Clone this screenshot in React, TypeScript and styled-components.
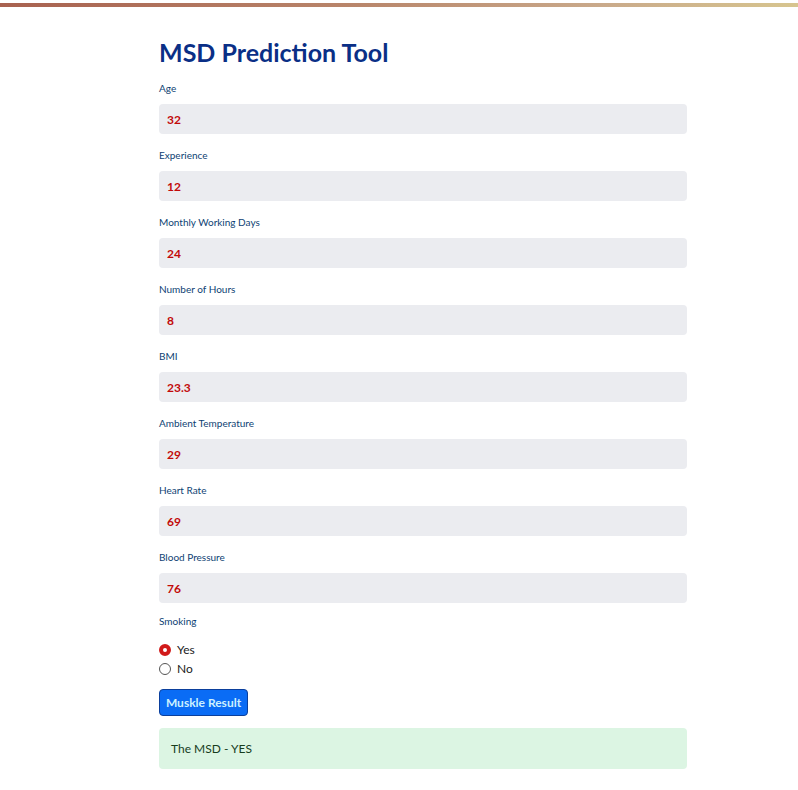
import styled, { createGlobalStyle } from "styled-components";

const GlobalStyle = createGlobalStyle`
  html, body {
    margin: 0;
    padding: 0;
    background: #ffffff;
    font-family: "Lato", "Noto Sans", sans-serif;
  }
`;

const TopBar = styled.div`
  height: 4px;
  margin-top: 3px;
  background: linear-gradient(90deg, #a8614f 0%, #b9866b 45%, #c9a98a 75%, #d7c58f 100%);
`;

const Page = styled.main`
  width: 528px;
  padding: 29px 0 0 159px;
  display: flex;
  flex-direction: column;
`;

const Title = styled.h1`
  margin: 0 0 14px;
  font-size: 25px;
  line-height: 32px;
  font-weight: 700;
  color: #0a2f86;
`;

const Field = styled.div`
  display: flex;
  flex-direction: column;
  height: 67px;
`;

const Label = styled.label<{ $gap?: number }>`
  font-size: 10px;
  line-height: 12px;
  color: #0e3f73;
  margin-bottom: ${(p) => p.$gap ?? 10}px;
`;

const Box = styled.div`
  height: 30px;
  background: #ebecf0;
  border-radius: 4px;
  display: flex;
  align-items: center;
  padding-left: 8px;
  font-size: 12px;
  font-weight: 700;
  color: #c20a0a;
`;

const Group = styled.div`
  display: flex;
  flex-direction: column;
  margin-top: -3px;
`;

const RadioGroup = styled.div`
  display: flex;
  flex-direction: column;
  gap: 6px;
`;

const RadioRow = styled.div`
  display: flex;
  align-items: center;
  gap: 6px;
  font-size: 12px;
  line-height: 13px;
  color: #1b1b1b;
`;

const Dot = styled.span<{ $on?: boolean }>`
  width: 12px;
  height: 12px;
  box-sizing: border-box;
  border-radius: 50%;
  border: ${(p) => (p.$on ? "4px solid #d11a1a" : "1px solid #555")};
  background: #fff;
`;

const Button = styled.button`
  align-self: flex-start;
  margin-top: 14px;
  width: 89px;
  height: 27px;
  background: #0a6cf5;
  border: 1px solid #0b3f9c;
  border-radius: 4px;
  color: #cdf1ff;
  font-family: inherit;
  font-size: 12px;
  font-weight: 700;
  padding: 0;
`;

const Result = styled.div`
  margin-top: 12px;
  height: 41px;
  background: #dcf5e3;
  border-radius: 4px;
  display: flex;
  align-items: center;
  padding-left: 12px;
  font-size: 12px;
  color: #173d1e;
`;

const fields = [
  ["Age", "32"],
  ["Experience", "12"],
  ["Monthly Working Days", "24"],
  ["Number of Hours", "8"],
  ["BMI", "23.3"],
  ["Ambient Temperature", "29"],
  ["Heart Rate", "69"],
  ["Blood Pressure", "76"],
];

export default function App() {
  return (
    <>
      <GlobalStyle />
      <TopBar />
      <Page>
        <Title>MSD Prediction Tool</Title>
        {fields.map(([label, value]) => (
          <Field key={label}>
            <Label>{label}</Label>
            <Box>{value}</Box>
          </Field>
        ))}
        <Group>
          <Label $gap={16}>Smoking</Label>
          <RadioGroup>
            <RadioRow>
              <Dot $on />
              Yes
            </RadioRow>
            <RadioRow>
              <Dot />
              No
            </RadioRow>
          </RadioGroup>
        </Group>
        <Button>Muskle Result</Button>
        <Result>The MSD - YES</Result>
      </Page>
    </>
  );
}
